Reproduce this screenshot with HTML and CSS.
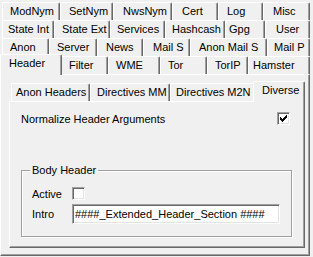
FILE: index.html
```html
<!DOCTYPE html>
<html>
<head>
<meta charset="utf-8">
<link rel="stylesheet" href="styles.css">
</head>
<body>
<div class="tabctl">
  <div class="row r1">
    <div class="tab w58 p7">ModNym</div>
    <div class="tab w53 p8">SetNym</div>
    <div class="tab w59 p9">NwsNym</div>
    <div class="tab w46 p9">Cert</div>
    <div class="tab w45 p8">Log</div>
    <div class="tab w47 p9">Misc</div>
  </div>
  <div class="row">
    <div class="tab w52 p5">State Int</div>
    <div class="tab w56 p7">State Ext</div>
    <div class="tab w55 p6">Services</div>
    <div class="tab w60 p6">Hashcash</div>
    <div class="tab w40 p3">Gpg</div>
    <div class="tab w45 p10">User</div>
  </div>
  <div class="row">
    <div class="tab w47 p7">Anon</div>
    <div class="tab w48 p7">Server</div>
    <div class="tab w46 p8">News</div>
    <div class="tab w47 p9">Mail S</div>
    <div class="tab w77 p8">Anon Mail S</div>
    <div class="tab w43 p6">Mail P</div>
  </div>
  <div class="row front">
    <div class="tab sel w58 p8">Header</div>
    <div class="tab w48 p8">Filter</div>
    <div class="tab w52 p7">WME</div>
    <div class="tab w47 p7">Tor</div>
    <div class="tab w41 p7">TorIP</div>
    <div class="tab w62 p4">Hamster</div>
  </div>
  <div class="panel">
    <div class="sub">
      <div class="row subrow front">
        <div class="tab w79 p4">Anon Headers</div>
        <div class="tab w80 p6">Directives MM</div>
        <div class="tab w85 p5">Directives M2N</div>
        <div class="tab sel w48 p8">Diverse</div>
      </div>
      <div class="subpanel">
        <div class="opt">
          <span>Normalize Header Arguments</span>
          <span class="check">
            <svg width="9" height="9" viewBox="0 0 9 9" shape-rendering="crispEdges"><path d="M1 3h1v3h-1z M2 4h1v3h-1z M3 5h1v3h-1z M4 4h1v3h-1z M5 3h1v3h-1z M6 2h1v3h-1z M7 1h1v3h-1z" fill="#000"/></svg>
          </span>
        </div>
        <fieldset class="group">
          <legend>Body Header</legend>
          <div class="field">
            <span class="lbl">Active</span>
            <span class="check"></span>
          </div>
          <div class="field">
            <span class="lbl">Intro</span>
            <div class="input">####_Extended_Header_Section ####</div>
          </div>
        </fieldset>
      </div>
    </div>
  </div>
</div>
</body>
</html>
```
FILE: styles.css
```css
html, body {
  margin: 0;
  padding: 0;
  background: #f0f0f0;
}
body {
  width: 313px;
  height: 257px;
  overflow: hidden;
  font-family: "Liberation Sans", Arial, sans-serif;
  font-size: 11px;
  color: #000;
}
.tabctl {
  width: 310px;
}
.row {
  display: flex;
  height: 18px;
  padding-left: 2px;
}
.r1 {
  margin-top: 2px;
}
.front {
  position: relative;
  z-index: 2;
}
.tab {
  box-sizing: border-box;
  height: 18px;
  flex: none;
  border-left: 1px solid #fff;
  border-top: 1px solid #fff;
  border-right: 1px solid #696969;
  border-radius: 2px 2px 0 0;
  box-shadow: inset -1px 0 #a0a0a0;
  background: #f0f0f0;
  text-align: left;
  line-height: 17px;
  white-space: nowrap;
}
.tab.sel {
  height: 21px;
  margin: -2px -2px 0 -2px;
  line-height: 16px;
  position: relative;
  z-index: 3;
}
.p3 { padding-left: 3px; }
.p4 { padding-left: 4px; }
.p5 { padding-left: 5px; }
.p6 { padding-left: 6px; }
.p7 { padding-left: 7px; }
.p8 { padding-left: 8px; }
.p9 { padding-left: 9px; }
.p10 { padding-left: 10px; }
.w40 { width: 40px; }
.w41 { width: 41px; }
.w43 { width: 43px; }
.w45 { width: 45px; }
.w46 { width: 46px; }
.w47 { width: 47px; }
.w48 { width: 48px; }
.w52 { width: 52px; }
.w53 { width: 53px; }
.w55 { width: 55px; }
.w56 { width: 56px; }
.w58 { width: 58px; }
.w59 { width: 59px; }
.w60 { width: 60px; }
.w62 { width: 62px; }
.w77 { width: 77px; }
.w79 { width: 79px; }
.w80 { width: 80px; }
.w85 { width: 85px; }
.tab.sel.w58 { width: 62px; }
.tab.sel.w48 { width: 52px; }

.panel {
  box-sizing: border-box;
  width: 310px;
  height: 182px;
  border: 1px solid;
  border-color: #fff #696969 #696969 #fff;
  box-shadow: inset -1px -1px #a0a0a0;
  padding: 8px 0 0 8px;
}
.sub {
  width: 296px;
}
.subpanel {
  box-sizing: border-box;
  height: 147px;
  border: 1px solid;
  border-color: #fff #696969 #696969 #fff;
  box-shadow: inset -1px -1px #a0a0a0;
  padding: 10px 0 0 11px;
}
.opt {
  display: flex;
  justify-content: space-between;
  align-items: center;
  height: 13px;
  padding-right: 14px;
}
.check {
  box-sizing: border-box;
  display: inline-flex;
  align-items: center;
  justify-content: center;
  width: 13px;
  height: 13px;
  background: #fff;
  border: 1px solid;
  border-color: #a0a0a0 #fff #fff #a0a0a0;
  box-shadow: inset 1px 1px #696969, inset -1px -1px #e3e3e3;
}
.check svg {
  display: block;
}
.group {
  box-sizing: border-box;
  width: 271px;
  margin: 39px 0 0 0;
  padding: 0 10px 12px 8px;
  border: 1px solid #a0a0a0;
  box-shadow: inset 1px 1px #fff, 1px 1px #fff;
}
.group legend {
  padding: 0 2px;
  line-height: 13px;
  background: #f0f0f0;
}
.field {
  display: flex;
  align-items: center;
  padding-left: 2px;
}
.field:first-of-type {
  margin-top: 10px;
  height: 13px;
}
.field + .field {
  margin-top: 4px;
}
.lbl {
  width: 40px;
}
.input {
  box-sizing: border-box;
  width: 208px;
  height: 20px;
  background: #fff;
  border: 1px solid;
  border-color: #a0a0a0 #fff #fff #a0a0a0;
  box-shadow: inset 1px 1px #696969, inset -1px -1px #e3e3e3;
  padding: 0 0 0 2px;
  line-height: 18px;
  white-space: nowrap;
  overflow: hidden;
}
```
